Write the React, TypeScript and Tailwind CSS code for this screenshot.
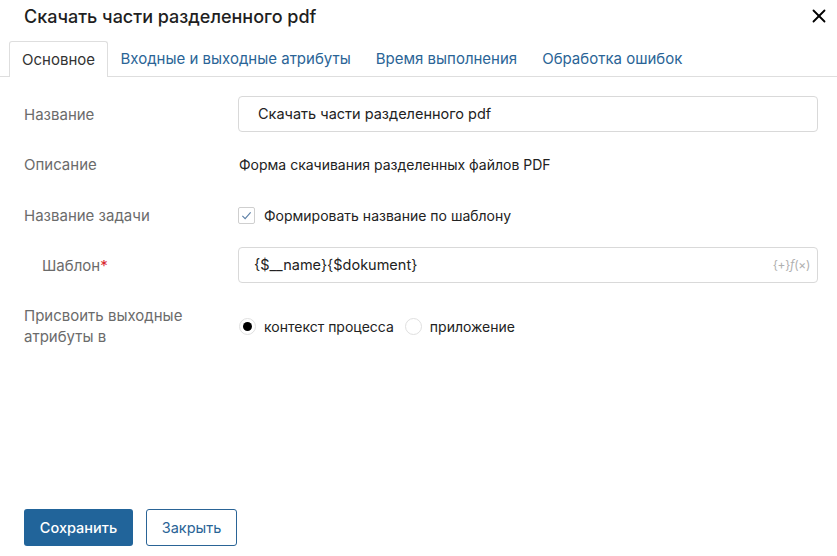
import { X } from "lucide-react";

const font = { fontFamily: "Inter, 'Noto Sans', sans-serif" };

function Row({ label, children, className = "" }: { label: React.ReactNode; children: React.ReactNode; className?: string }) {
  return (
    <div className={`flex items-center ${className}`}>
      <div className="w-[214px] shrink-0 text-[15px] leading-[21px] text-[#6b6b6b]">{label}</div>
      <div className="flex-1">{children}</div>
    </div>
  );
}

export default function App() {
  return (
    <div className="w-[837px] h-[556px] bg-white flex flex-col text-[#222]" style={font}>
      <div className="flex items-center justify-between pl-6 pr-[7px] h-[31px] pt-[1px]">
        <h1 className="text-[18px] font-medium text-[#1f1f1f]">Скачать части разделенного pdf</h1>
        <X className="w-[22px] h-[22px] text-black" strokeWidth={2} />
      </div>

      <div className="mt-[11px] flex items-end border-b border-[#dedede] pl-[9px] h-[35px]">
        <div className="h-[36px] -mb-px px-3 pt-[2px] flex items-center border border-b-0 border-[#dedede] rounded-t-[3px] bg-white text-[15px] text-[#333]">
          Основное
        </div>
        {["Входные и выходные атрибуты", "Время выполнения", "Обработка ошибок"].map((t) => (
          <div key={t} className="h-[35px] px-[12.5px] pt-[2px] flex items-center text-[15px] text-[#2a6496]">
            {t}
          </div>
        ))}
      </div>

      <div className="flex-1 flex flex-col pl-6 pr-[19px] pt-[19px]">
        <Row label="Название">
          <div className="h-[36px] border border-[#d9d9d9] rounded-[4px] flex items-center pl-[19px] text-[14.5px]">
            Скачать части разделенного pdf
          </div>
        </Row>

        <Row label="Описание" className="mt-[14px] h-[36px]">
          <div className="text-[14px] pl-[1px]">Форма скачивания разделенных файлов PDF</div>
        </Row>

        <Row label="Название задачи" className="mt-[15px] h-[36px]">
          <label className="flex items-center gap-[9px] text-[14px]">
            <span className="w-[17px] h-[17px] border border-[#cfcfcf] rounded-[2px] flex items-center justify-center">
              <svg viewBox="0 0 12 12" className="w-[11px] h-[11px]" fill="none" stroke="#5b7fa6" strokeWidth="1.2">
                <path d="M1.5 6.5 L4.5 9.5 L10.5 2.5" />
              </svg>
            </span>
            Формировать название по шаблону
          </label>
        </Row>

        <Row
          label={
            <span className="pl-[18px]">
              Шаблон<span className="text-[#d9262e]">*</span>
            </span>
          }
          className="mt-[14px]"
        >
          <div className="h-[36px] border border-[#d9d9d9] rounded-[4px] flex items-center justify-between pl-[15px] pr-[7px] text-[14.5px]">
            <span>{"{$__name}{$dokument}"}</span>
            <span className="text-[12px] text-[#b0b0b0] tracking-tight">{"{+}"}<i>f</i>{"(×)"}</span>
          </div>
        </Row>

        <Row
          label={
            <span className="block leading-[21px]">
              Присвоить выходные
              <br />
              атрибуты в
            </span>
          }
          className="mt-[22px]"
        >
          <div className="flex items-center text-[14px]">
            <span className="w-[17px] h-[17px] rounded-full border border-[#e0e0e0] flex items-center justify-center ml-[1px]">
              <span className="w-[9px] h-[9px] rounded-full bg-black" />
            </span>
            <span className="ml-[8px]">контекст процесса</span>
            <span className="ml-[11px] w-[17px] h-[17px] rounded-full border border-[#e0e0e0]" />
            <span className="ml-[8px]">приложение</span>
          </div>
        </Row>

        <div className="mt-auto mb-[10px] flex gap-[13px]">
          <button className="h-[37px] w-[109px] rounded-[3px] bg-[#21649a] text-white text-[14.5px] font-medium">Сохранить</button>
          <button className="h-[37px] w-[91px] rounded-[3px] border border-[#2a6496] text-[#2a6496] text-[14.5px]">Закрыть</button>
        </div>
      </div>
    </div>
  );
}
